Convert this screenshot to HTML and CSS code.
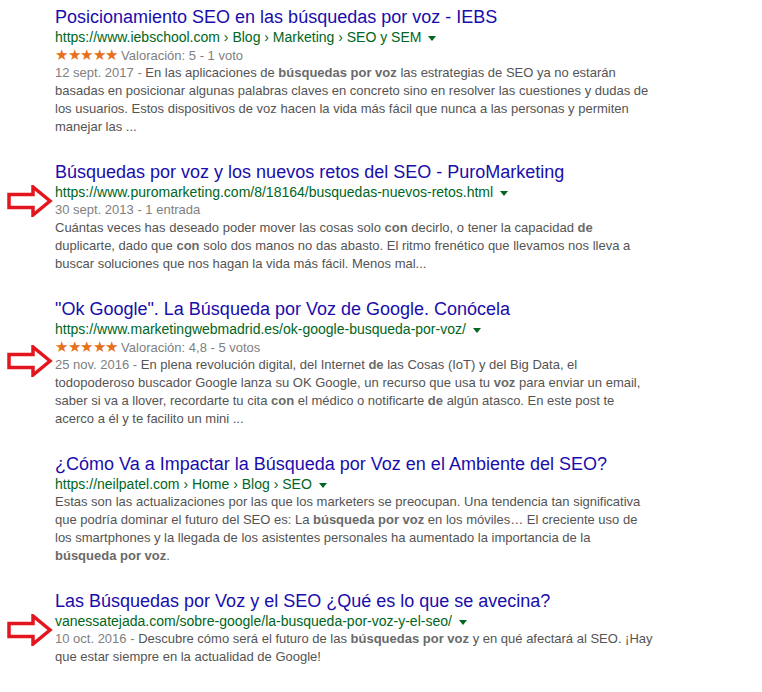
FILE: index.html
```html
<!DOCTYPE html>
<html lang="es">
<head>
    <meta charset="UTF-8">
    <title>Búsquedas por voz - resultados</title>
    <link rel="stylesheet" href="styles.css">
</head>
<body>
    <div class="results">

        <div class="result">
            <h3 class="title"><a href="#">Posicionamiento SEO en las búsquedas por voz - IEBS</a></h3>
            <div class="url">https://www.iebschool.com › Blog › Marketing › SEO y SEM<span class="caret"></span></div>
            <div class="rating"><span class="stars">★★★★★</span> Valoración: 5 - 1 voto</div>
            <div class="snippet"><span class="date">12 sept. 2017 - </span>En las aplicaciones de <b>búsquedas por voz</b> las estrategias de SEO ya no estarán<br>basadas en posicionar algunas palabras claves en concreto sino en resolver las cuestiones y dudas de<br>los usuarios. Estos dispositivos de voz hacen la vida más fácil que nunca a las personas y permiten<br>manejar las ...</div>
        </div>

        <div class="result">
            <svg class="arrow" width="46" height="32" viewBox="0 0 46 32"><path d="M2 9.5 H26 V2 L43 16 L26 30 V22.5 H2 Z" fill="#fff" stroke="#e3151f" stroke-width="3.5" stroke-linejoin="miter"/></svg>
            <h3 class="title"><a href="#">Búsquedas por voz y los nuevos retos del SEO - PuroMarketing</a></h3>
            <div class="url">https://www.puromarketing.com/8/18164/busquedas-nuevos-retos.html<span class="caret"></span></div>
            <div class="rating">30 sept. 2013 - 1 entrada</div>
            <div class="snippet">Cuántas veces has deseado poder mover las cosas solo <b>con</b> decirlo, o tener la capacidad <b>de</b><br>duplicarte, dado que <b>con</b> solo dos manos no das abasto. El ritmo frenético que llevamos nos lleva a<br>buscar soluciones que nos hagan la vida más fácil. Menos mal...</div>
        </div>

        <div class="result">
            <svg class="arrow arrow-low" width="46" height="32" viewBox="0 0 46 32"><path d="M2 9.5 H26 V2 L43 16 L26 30 V22.5 H2 Z" fill="#fff" stroke="#e3151f" stroke-width="3.5" stroke-linejoin="miter"/></svg>
            <h3 class="title"><a href="#">"Ok Google". La Búsqueda por Voz de Google. Conócela</a></h3>
            <div class="url">https://www.marketingwebmadrid.es/ok-google-busqueda-por-voz/<span class="caret"></span></div>
            <div class="rating"><span class="stars">★★★★★</span> Valoración: 4,8 - 5 votos</div>
            <div class="snippet"><span class="date">25 nov. 2016 - </span>En plena revolución digital, del Internet <b>de</b> las Cosas (IoT) y del Big Data, el<br>todopoderoso buscador Google lanza su OK Google, un recurso que usa tu <b>voz</b> para enviar un email,<br>saber si va a llover, recordarte tu cita <b>con</b> el médico o notificarte <b>de</b> algún atasco. En este post te<br>acerco a él y te facilito un mini ...</div>
        </div>

        <div class="result">
            <h3 class="title"><a href="#">¿Cómo Va a Impactar la Búsqueda por Voz en el Ambiente del SEO?</a></h3>
            <div class="url">https://neilpatel.com › Home › Blog › SEO<span class="caret"></span></div>
            <div class="snippet">Estas son las actualizaciones por las que los marketers se preocupan. Una tendencia tan significativa<br>que podría dominar el futuro del SEO es: La <b>búsqueda por voz</b> en los móviles… El creciente uso de<br>los smartphones y la llegada de los asistentes personales ha aumentado la importancia de la<br><b>búsqueda por voz</b>.</div>
        </div>

        <div class="result">
            <svg class="arrow" width="46" height="32" viewBox="0 0 46 32"><path d="M2 9.5 H26 V2 L43 16 L26 30 V22.5 H2 Z" fill="#fff" stroke="#e3151f" stroke-width="3.5" stroke-linejoin="miter"/></svg>
            <h3 class="title"><a href="#">Las Búsquedas por Voz y el SEO ¿Qué es lo que se avecina?</a></h3>
            <div class="url">vanessatejada.com/sobre-google/la-busqueda-por-voz-y-el-seo/<span class="caret"></span></div>
            <div class="snippet"><span class="date">10 oct. 2016 - </span>Descubre cómo será el futuro de las <b>búsquedas por voz</b> y en qué afectará al SEO. ¡Hay<br>que estar siempre en la actualidad de Google!</div>
        </div>

    </div>
</body>
</html>
```

FILE: styles.css
```css
body { margin: 0; background-color: #fff; font-family: Arial, "Liberation Sans", sans-serif; }
.results { padding: 6px 0 0 55px; width: 660px; }
.result { position: relative; margin-bottom: 25px; }
.title { margin: 0; font-size: 18px; font-weight: normal; line-height: 22px; white-space: nowrap; }
.title a { color: #1a0dab; text-decoration: none; }
.url { font-size: 14px; line-height: 18px; color: #006621; white-space: nowrap; }
.caret { display: inline-block; margin-left: 7px; vertical-align: middle; border-top: 5px solid #006621; border-left: 4px solid transparent; border-right: 4px solid transparent; }
.rating { height: 18px; font-size: 13px; line-height: 18px; color: #808080; overflow: hidden; }
.stars { color: #e7711b; letter-spacing: -0.5px; font-size: 15px; }
.snippet { font-size: 13px; line-height: 18px; color: #545454; white-space: nowrap; }
.snippet b { color: #6a6a6a; }
.date { color: #808080; }
.arrow { position: absolute; left: -48px; top: 24px; }
.arrow-low { top: 47px; }
```
